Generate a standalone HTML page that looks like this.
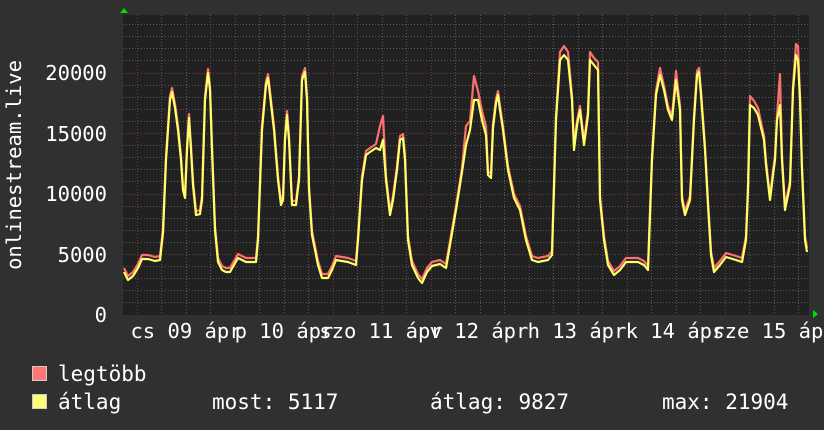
<!DOCTYPE html>
<html><head><meta charset="utf-8"><style>
html,body{margin:0;padding:0;background:#303030;}
svg{display:block;}
text{font-family:"DejaVu Sans Mono","Liberation Mono",monospace;font-size:20.5px;fill:#ffffff;}
.lg{font-size:21px;}
</style></head><body>
<svg width="824" height="430" viewBox="0 0 824 430" xmlns="http://www.w3.org/2000/svg">
<rect width="824" height="430" fill="#303030"/>
<rect x="123" y="15" width="686" height="300" fill="#212121"/>
<g stroke="#5a5a5a" stroke-width="1" stroke-dasharray="1,2" shape-rendering="crispEdges">
<path d="M123 302.5H809M123 290.5H809M123 278.5H809M123 266.5H809M123 242.5H809M123 230.5H809M123 218.5H809M123 206.5H809M123 181.5H809M123 169.5H809M123 157.5H809M123 145.5H809M123 121.5H809M123 109.5H809M123 97.5H809M123 85.5H809M123 60.5H809M123 48.5H809M123 36.5H809M123 24.5H809"/>
<path d="M161.5 15V315M186.5 15V315M210.5 15V315M259.5 15V315M284.5 15V315M308.5 15V315M357.5 15V315M382.5 15V315M406.5 15V315M455.5 15V315M480.5 15V315M504.5 15V315M553.5 15V315M578.5 15V315M602.5 15V315M651.5 15V315M676.5 15V315M700.5 15V315M749.5 15V315M774.5 15V315M798.5 15V315"/>
</g>
<g stroke="#7a3d3d" stroke-width="1" stroke-dasharray="1,2" shape-rendering="crispEdges">
<path d="M123 254.5H809M123 194.5H809M123 133.5H809M123 73.5H809"/>
<path d="M137.5 15V315M235.5 15V315M333.5 15V315M431.5 15V315M529.5 15V315M627.5 15V315M725.5 15V315"/>
</g>
<polygon points="124,8 120,13 128,13" fill="#00dd00"/>
<polygon points="818,314 813,310 813,318" fill="#00dd00"/>
<g fill="none" stroke-width="2.2" stroke-linejoin="round">
<polyline transform="translate(0,-4)" stroke="#ff7070" points="124,272 128,280 133,276 138,268 142,259 148,259 155,261 160,260 163,233 166,160 170,100 172,92 175,108 178,130 181,160 183,190 185,198 187,150 189,118 191,150 193,185 196,215 200,214 202,200 205,100 208,73 210,90 212,150 215,230 218,262 222,270 226,272 230,272 234,265 238,258 246,262 256,262 258,240 262,130 266,85 268,78 270,95 274,130 278,180 281,205 283,200 285,140 287,115 289,140 292,205 296,205 299,180 302,80 305,72 307,100 309,190 312,235 318,265 322,278 328,278 332,270 336,260 348,262 356,265 358,240 362,180 366,155 370,152 376,148 380,130 383,120 386,180 390,215 393,200 397,170 400,140 403,138 405,160 408,240 412,265 418,278 422,283 427,272 432,266 440,264 446,268 450,245 456,210 462,172 466,130 470,125 474,80 478,95 482,115 486,130 488,175 491,178 493,128 496,103 498,95 500,110 503,130 508,170 514,198 520,210 526,240 532,260 538,262 548,260 552,255 556,120 560,56 564,50 568,56 572,100 574,150 577,125 580,110 584,145 586,130 588,115 590,56 594,62 598,66 600,200 604,240 608,265 614,275 620,270 626,262 638,262 644,265 648,270 652,160 656,95 660,72 664,90 668,110 672,120 676,75 680,110 682,200 685,215 690,200 694,120 697,75 699,72 701,95 705,150 708,205 711,255 714,272 720,265 726,257 736,260 742,262 746,240 748,190 750,100 754,105 758,112 764,140 766,165 770,200 773,175 775,160 777,120 780,78 782,160 785,210 790,185 793,90 796,48 798,50 800,100 802,170 805,240 807,252"/>
<polyline stroke="#ffff66" points="124,272 128,280 133,276 138,268 142,259 148,259 155,261 160,260 163,233 166,160 170,100 172,92 175,108 178,130 181,160 183,190 185,198 187,150 189,118 191,150 193,185 196,215 200,214 202,200 205,100 208,73 210,90 212,150 215,230 218,262 222,270 226,272 230,272 234,265 238,258 246,262 256,262 258,240 262,130 266,85 268,78 270,95 274,130 278,180 281,205 283,200 285,140 287,115 289,140 292,205 296,205 299,180 302,80 305,72 307,100 309,190 312,235 318,265 322,278 328,278 332,270 336,260 348,262 356,265 358,240 362,180 366,155 370,152 376,148 380,150 383,140 386,180 390,215 393,200 397,170 400,140 403,138 405,160 408,240 412,265 418,278 422,283 427,272 432,266 440,264 446,268 450,245 456,210 462,172 466,145 470,130 474,100 478,100 482,120 486,135 488,175 491,178 493,128 496,103 498,95 500,110 503,130 508,170 514,198 520,210 526,240 532,260 538,262 548,260 552,255 556,120 560,60 564,55 568,60 572,100 574,150 577,125 580,110 584,145 586,130 588,115 590,60 594,65 598,70 600,200 604,240 608,265 614,275 620,270 626,262 638,262 644,265 648,270 652,160 656,95 660,75 664,90 668,110 672,120 676,80 680,110 682,200 685,215 690,200 694,120 697,75 699,72 701,95 705,150 708,205 711,255 714,272 720,265 726,257 736,260 742,262 746,240 748,190 750,105 754,108 758,115 764,140 766,165 770,200 773,175 775,160 777,120 780,105 782,160 785,210 790,185 793,90 796,55 798,60 800,100 802,170 805,240 807,252"/>
</g>
<g text-anchor="end">
<text x="107" y="322">0</text>
<text x="107" y="262">5000</text>
<text x="107" y="201">10000</text>
<text x="107" y="141">15000</text>
<text x="107" y="80">20000</text>
</g>
<text transform="translate(21,165) rotate(-90)" text-anchor="middle">onlinestream.live</text>
<g text-anchor="middle">
<text x="186" y="338">cs 09 ápr</text>
<text x="284" y="338">p 10 ápr</text>
<text x="381" y="338">szo 11 ápr</text>
<text x="479" y="338">v 12 ápr</text>
<text x="577" y="338">h 13 ápr</text>
<text x="675" y="338">k 14 ápr</text>
<text x="774" y="338">sze 15 ápr</text>
</g>
<rect x="32.5" y="366.5" width="14" height="14" fill="#ff7777" stroke="#ccc" stroke-width="1"/>
<rect x="32.5" y="394.5" width="14" height="14" fill="#ffff77" stroke="#ccc" stroke-width="1"/>
<text class="lg" x="58" y="381">legtöbb</text>
<text class="lg" x="58" y="409">átlag</text>
<text class="lg" x="212" y="409">most: 5117</text>
<text class="lg" x="430" y="409">átlag: 9827</text>
<text class="lg" x="662" y="409">max: 21904</text>
</svg>
</body></html>
